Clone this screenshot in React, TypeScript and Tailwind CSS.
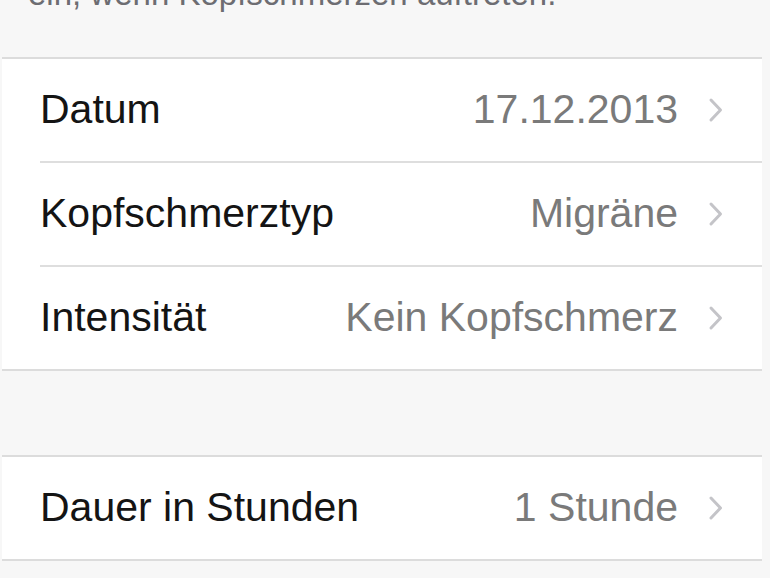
import React from "react";

const Chevron = () => (
  <svg width="15" height="26" viewBox="0 0 15 26" className="shrink-0">
    <polyline points="3,3 12.5,13 3,23" fill="none" stroke="#c4c4c8" strokeWidth="3" strokeLinecap="round" strokeLinejoin="round" />
  </svg>
);

const Row = ({ label, value, inset }: { label: string; value: string; inset: boolean }) => (
  <div className="flex flex-col bg-white">
    <div className="flex h-[102px] items-center pl-[38px] pr-[39px]">
      <span className="flex-1 text-[41px] text-[#141414]">{label}</span>
      <span className="text-[41px] text-[#7a7a7a]">{value}</span>
      <span className="ml-[30px] flex items-center">
        <Chevron />
      </span>
    </div>
    {inset ? (
      <div className="flex h-[2px] bg-white">
        <div className="w-[38px]" />
        <div className="flex-1 bg-[#dedede]" />
      </div>
    ) : (
      <div className="h-[2px] bg-[#dcdcdc]" />
    )}
  </div>
);

export default function App() {
  return (
    <div
      className="flex h-[578px] w-[770px] overflow-hidden bg-[#f7f7f7]"
      style={{ fontFamily: '"Liberation Sans", Arial, sans-serif' }}
    >
      <div className="ml-[2px] flex w-[760px] flex-col">
        <div className="h-[57px] overflow-hidden">
          <p className="mt-[-23px] whitespace-nowrap pl-[26px] text-[33px] leading-[33px] text-[#6d6d72]">
            ein, wenn Kopfschmerzen auftreten.
          </p>
        </div>
        <div className="h-[2px] bg-[#dcdcdc]" />
        <Row label="Datum" value="17.12.2013" inset />
        <Row label="Kopfschmerztyp" value="Migräne" inset />
        <Row label="Intensität" value="Kein Kopfschmerz" inset={false} />
        <div className="h-[84px]" />
        <div className="h-[2px] bg-[#dcdcdc]" />
        <Row label="Dauer in Stunden" value="1 Stunde" inset={false} />
      </div>
    </div>
  );
}
